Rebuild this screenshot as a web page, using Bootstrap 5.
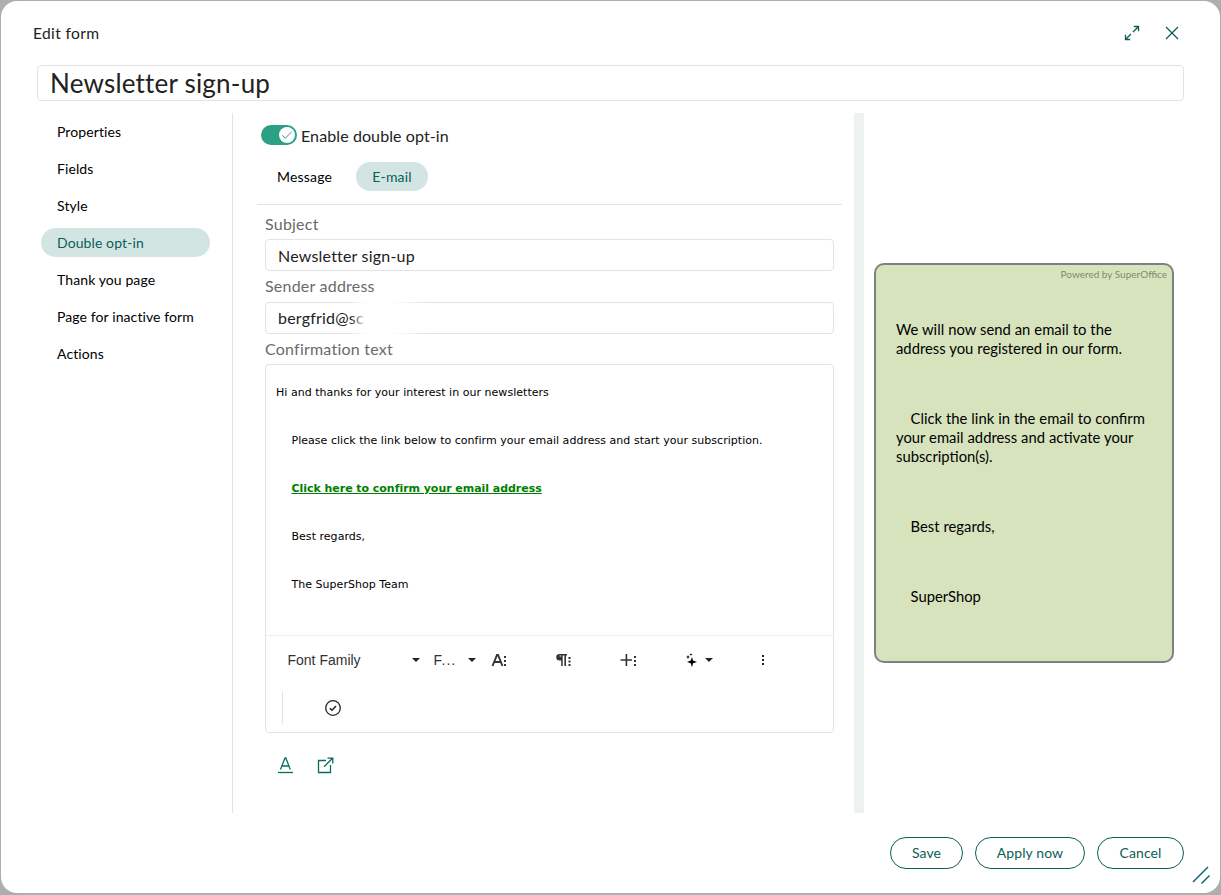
<!DOCTYPE html>
<html lang="en">
<head>
<meta charset="utf-8">
<title>Edit form</title>
<link href="https://cdn.jsdelivr.net/npm/bootstrap@5.3.0/dist/css/bootstrap.min.css" rel="stylesheet">
<style>
  body { background: #aeaeae; font-family: Lato, "Liberation Sans", sans-serif; font-size: 14px; line-height: 20px; color: #000; height: 895px; overflow: hidden; padding: 1px 1px 2px; }
  .dialog { height: 892px; background: #fff; border-radius: 16px; position: relative; }
  .dialog-head { height: 64px; padding: 0 38px 0 32px; font-size: 15.6px; letter-spacing: .35px; color: #222; }
  .form-title { height: 36px; margin: 0 36px; border: 1px solid #e2e4e4; border-radius: 4px; padding: 0 12px; font-size: 26px; line-height: 35px; color: #222; letter-spacing: .2px; }
  .panes { height: 700px; margin-top: 12px; }
  .side { width: 232px; border-right: 1px solid #e2e2e2; padding: 4px 22px 0 40px; gap: 8px; }
  .pill { height: 29px; line-height: 29px; border-radius: 15px; padding: 0 16px; color: #000; text-decoration: none; letter-spacing: .1px; white-space: nowrap; }
  .pill.on { background: #d2e5e3; color: #0a5e58; }
  .main-pane { width: 621px; padding: 12px 12px 0 24px; }
  .toggle-track { width: 36px; height: 20px; border-radius: 10px; background: #2ba084; padding: 2px; }
  .toggle-knob { width: 16px; height: 16px; border-radius: 50%; background: #fff; }
  .toggle-label { font-size: 16px; margin: 1px 0 -1px 4px; height: 20px; letter-spacing: .1px; color: #222; }
  .tabs-row { padding: 17px 0 13px 4px; gap: 8px; border-bottom: 1px solid #e2e4e4; }
  .tabs-row .pill { letter-spacing: .2px; }
  .fields { padding: 9px 8px 0; font-size: 16px; }
  .lbl { color: #6a6a6a; font-size: 16px; line-height: 20px; height: 22px; letter-spacing: .22px; }
  .field { height: 32px; border: 1px solid #e2e4e4; border-radius: 4px; padding: 2px 12px 0; line-height: 28px; font-size: 16px; color: #222; position: relative; letter-spacing: .2px; }
  .sender { padding-top: 1px; }
  .fade-out { position: absolute; left: 84px; top: -1px; width: 78px; height: 32px; background: linear-gradient(to right, rgba(255,255,255,0), #fff 22%, #fff 50%, rgba(255,255,255,0)); }
  .editor { height: 369px; border: 1px solid #e2e4e4; border-radius: 4px; }
  .editor-text { height: 270px; padding: 20px 10px 0; font-family: "DejaVu Sans", sans-serif; font-size: 11px; line-height: 16px; color: #000; letter-spacing: .03px; }
  .editor-text p { margin: 0 0 32px; white-space: nowrap; }
  .editor-text p + p { padding-left: 15.5px; }
  .editor-text a { color: #008000; font-weight: bold; letter-spacing: -.04px; }
  .tools { border-top: 1px solid #eee; height: 98px; font-family: "Liberation Sans", sans-serif; font-size: 14px; color: #333; }
  .tools-row { height: 47px; padding-left: 21.5px; }
  .splitter { width: 10px; background: #edf1f0; }
  .preview { width: 300px; height: 400px; margin: 150px 0 0 10px; border: 2px solid #808080; border-radius: 10px; background: #d7e3bc; font-size: 14.8px; line-height: 19px; }
  .powered { font-size: 10px; line-height: 18px; color: #82896f; padding-right: 5px; }
  .preview-text { padding: 37px 20px 0; word-spacing: .2px; }
  .preview-text p { margin: 0 0 51px; white-space: nowrap; }
  .preview-text p + p { text-indent: 14.5px; }
  .foot { padding: 24px 36px 0 0; gap: 12px; }
  .btn-pill { height: 32px; border: 1px solid #0a5e58; border-radius: 16px; color: #0a5e58; font-size: 14px; line-height: 20px; padding: 5px 0; letter-spacing: .1px; }
  .grip { position: absolute; right: 10px; bottom: 9px; }
  svg { display: block; flex: none; }
</style>
</head>
<body>
<div class="dialog">
  <header class="dialog-head d-flex align-items-center justify-content-between">
    <span>Edit form</span>
    <div class="d-flex align-items-center">
      <svg width="16" height="16" viewBox="0 0 16 16" fill="none" stroke="#0a5e58" stroke-width="1.3" style="margin-right:22px"><path d="M9 7l5.300-5.300M9.800 1.500h4.700v4.700M7 9l-5.300 5.300M1.500 9.800v4.700h4.700"/></svg>
      <svg width="20" height="16" viewBox="0 0 20 16" fill="none" stroke="#0a5e58" stroke-width="1.3"><path d="M4 2l12 12M16 2L4 14"/></svg>
    </div>
  </header>
  <div class="form-title">Newsletter sign-up</div>
  <div class="panes d-flex">
    <nav class="side d-flex flex-column">
      <a class="pill">Properties</a>
      <a class="pill">Fields</a>
      <a class="pill">Style</a>
      <a class="pill on">Double opt-in</a>
      <a class="pill">Thank you page</a>
      <a class="pill">Page for inactive form</a>
      <a class="pill">Actions</a>
    </nav>
    <main class="main-pane">
      <div class="d-flex align-items-center ps-1">
        <span class="toggle-track d-flex justify-content-end"><span class="toggle-knob"><svg width="16" height="16" viewBox="0 0 16 16" fill="none" stroke="#2ba084" stroke-width="1"><path d="M3.300 8.300l3 2.900 6.400-6.400"/></svg></span></span>
        <span class="toggle-label">Enable double opt-in</span>
      </div>
      <div class="tabs-row d-flex">
        <a class="pill">Message</a>
        <a class="pill on">E-mail</a>
      </div>
      <div class="fields">
        <div class="lbl">Subject</div>
        <div class="field" style="margin:3px 0 5px">Newsletter sign-up</div>
        <div class="lbl">Sender address</div>
        <div class="field sender" style="margin:4px 0 5px">bergfrid@sc<span class="fade-out"></span></div>
        <div class="lbl">Confirmation text</div>
        <div class="editor" style="margin-top:3px">
          <div class="editor-text">
            <p>Hi and thanks for your interest in our newsletters</p>
            <p>Please click the link below to confirm your email address and start your subscription.</p>
            <p><a href="#">Click here to confirm your email address</a></p>
            <p>Best regards,</p>
            <p>The SuperShop Team</p>
          </div>
          <div class="tools">
            <div class="tools-row d-flex align-items-center">
              <span style="width:123px">Font Family</span>
              <svg width="10" height="6" viewBox="0 0 10 6" fill="#222"><path d="M1 1h8L5 5z"/></svg>
              <span style="width:33px;margin-left:13px;letter-spacing:1px">F...</span>
              <svg width="10" height="6" viewBox="0 0 10 6" fill="#222"><path d="M1 1h8L5 5z"/></svg>
              <svg style="margin-left:14px" width="18" height="16" viewBox="0 0 18 16"><path d="M1.500 14L6 3h1l4.500 11M3.500 10h6" fill="none" stroke="#333" stroke-width="1.900"/><path d="M13 4h2v2h-2zM13 8h2v2h-2zM13 12h2v2h-2z" fill="#333"/></svg>
              <svg style="margin-left:46.500px" width="18" height="16" viewBox="0 0 18 16" fill="#333"><path fill-rule="evenodd" d="M4.500 2H12v1.500h-1V14H9.400V3.500H7.700V14H6.200V8.500H4.500a3.200 3.200 0 010-6.500zM4.600 3.600h1.600v1H4.600zM13.500 5h2v2h-2zM13.500 8.500h2v2h-2zM13.500 12h2v2h-2z"/></svg>
              <svg style="margin-left:47px" width="18" height="16" viewBox="0 0 18 16" fill="#333"><path d="M5.600 2h1.600v5.200H12v1.600H7.200V14H5.600V8.800H.6V7.200h5zM14 4h2v2h-2zM14 8h2v2h-2zM14 12h2v2h-2z"/></svg>
              <svg style="margin-left:47px" width="14" height="16" viewBox="0 0 14 16" fill="#000"><path d="M7 5l1 3.500 4 1.500-4 1.300-1 4-1.300-4L2 10l3.700-1.500zM3 3l.6 1.400L5 5l-1.400.6L3 7l-.6-1.400L1 5l1.400-.6zM6 1l.4 1.100 1.100.4-1.100.4L6 4l-.4-1.100-1.100-.4 1.100-.4z"/></svg>
              <svg style="margin-left:5px" width="10" height="6" viewBox="0 0 10 6" fill="#222"><path d="M1 1h8L5 5z"/></svg>
              <svg style="margin-left:47px" width="4" height="14" viewBox="0 0 4 14" fill="#222"><path d="M1 2h2v2H1zM1 6h2v2H1zM1 10h2v2H1z"/></svg>
            </div>
            <div class="d-flex align-items-center" style="margin:8px 0 0 16px;height:33px;border-left:1px solid #e2e4e4;padding-left:41px">
              <svg width="18" height="18" viewBox="0 0 18 18" fill="none" stroke="#222" stroke-width="1.300"><circle cx="9" cy="9" r="7.300"/><path d="M5.800 9.200l2.200 2.100 4-4.300" stroke-width="1.500"/></svg>
            </div>
          </div>
        </div>
        <div class="d-flex" style="margin:23px 0 0 12px;gap:23px">
          <svg width="17" height="18" viewBox="0 0 17 18" fill="none" stroke="#0a6b62" stroke-width="1.300"><path d="M3.500 13.500L8 2h.8l4.500 11.500M5.200 10h6.400"/><path d="M1 16.500h15"/></svg>
          <svg width="17" height="18" viewBox="0 0 17 18" fill="none" stroke="#0a6b62" stroke-width="1.300"><path d="M9 4.500H1.500v12h12V9M7 10.800l8.500-8.500M10.500 2.200h5.300v5.300"/></svg>
        </div>
      </div>
    </main>
    <div class="splitter"></div>
    <aside class="preview">
      <div class="powered text-end">Powered by SuperOffice</div>
      <div class="preview-text">
        <p>We will now send an email to the<br>address you registered in our form.</p>
        <p>Click the link in the email to confirm<br>your email address and activate your<br>subscription(s).</p>
        <p>Best regards,</p>
        <p>SuperShop</p>
      </div>
    </aside>
  </div>
  <footer class="foot d-flex justify-content-end">
    <button class="btn btn-pill" style="width:73px">Save</button>
    <button class="btn btn-pill" style="width:110px">Apply now</button>
    <button class="btn btn-pill" style="width:87px">Cancel</button>
  </footer>
  <svg class="grip" width="18" height="18" viewBox="0 0 18 18" fill="none" stroke="#0a6b75" stroke-width="1.500"><path d="M1 16L16 1M9.500 17.500L17.500 9.500"/></svg>
</div>
<script src="https://cdn.jsdelivr.net/npm/bootstrap@5.3.0/dist/js/bootstrap.bundle.min.js"></script>
</body>
</html>
